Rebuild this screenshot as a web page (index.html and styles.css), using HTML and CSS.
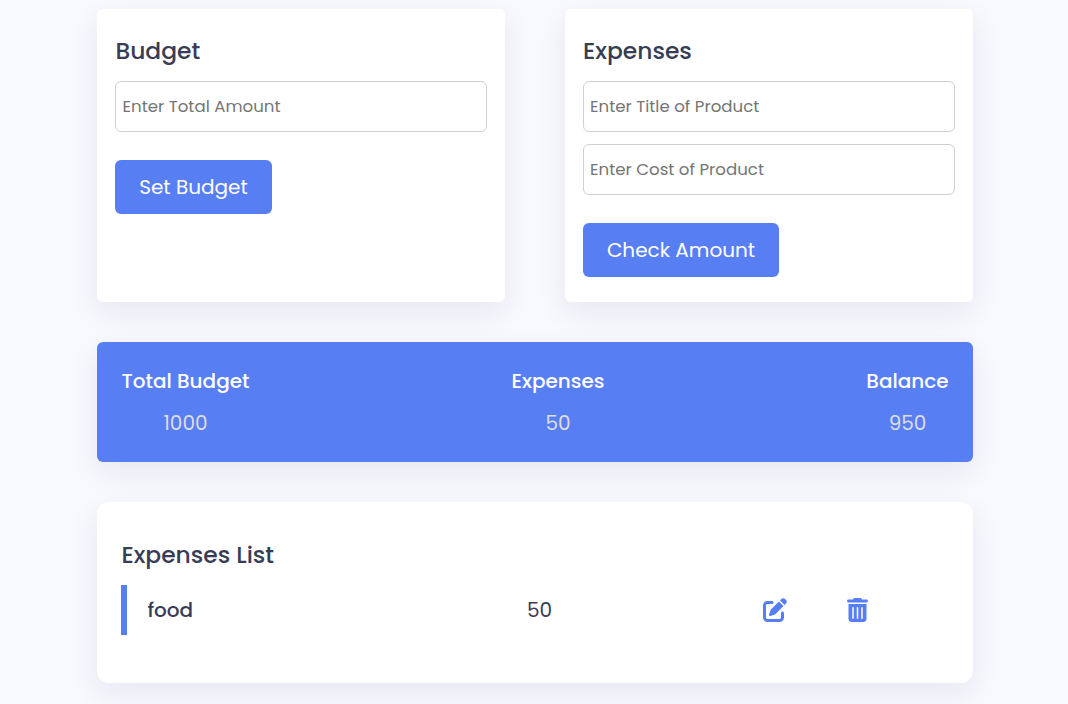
FILE: index.html
```html
<!DOCTYPE html>
<html lang="en">
<head>
<meta charset="utf-8">
<title>Budget App</title>
<link rel="stylesheet" href="styles.css">
</head>
<body>
<main class="wrapper">
  <div class="forms">
    <section class="card">
      <h3 class="title">Budget</h3>
      <input class="field field-budget" type="text" placeholder="Enter Total Amount">
      <button class="submit submit-budget">Set Budget</button>
    </section>
    <section class="card">
      <h3 class="title title-expenses">Expenses</h3>
      <input class="field" type="text" placeholder="Enter Title of Product">
      <input class="field" type="text" placeholder="Enter Cost of Product">
      <button class="submit submit-check">Check Amount</button>
    </section>
  </div>
  <section class="totals">
    <div class="total-budget"><p class="label">Total Budget</p><span class="value">1000</span></div>
    <div class="total-spent"><p class="label">Expenses</p><span class="value">50</span></div>
    <div class="total-balance"><p class="label">Balance</p><span class="value">950</span></div>
  </section>
  <section class="list">
    <h3 class="title">Expenses List</h3>
    <div class="row">
      <p class="product">food</p>
      <p class="amount">50</p>
      <button class="icon" aria-label="Edit"><svg width="24" height="24" viewBox="0 0 512 512"><path d="M471.6 21.7c-21.9-21.9-57.3-21.9-79.2 0L362.3 51.7l97.9 97.9 30.1-30.1c21.9-21.9 21.9-57.3 0-79.2L471.6 21.7zm-299.2 220c-6.1 6.1-10.8 13.6-13.5 21.9l-29.6 88.8c-2.9 8.6-.6 18.1 5.8 24.6s15.9 8.7 24.6 5.8l88.8-29.6c8.2-2.7 15.7-7.4 21.9-13.5L437.7 172.3 339.7 74.3 172.4 241.7zM96 64C43 64 0 107 0 160V416c0 53 43 96 96 96H352c53 0 96-43 96-96V320c0-17.7-14.3-32-32-32s-32 14.3-32 32v96c0 17.7-14.3 32-32 32H96c-17.7 0-32-14.3-32-32V160c0-17.7 14.3-32 32-32h96c17.7 0 32-14.3 32-32s-14.3-32-32-32H96z"/></svg></button>
      <button class="icon" aria-label="Delete"><svg width="21" height="24" viewBox="0 0 448 512"><path d="M135.2 17.7L128 32H32C14.3 32 0 46.3 0 64S14.3 96 32 96H416c17.7 0 32-14.3 32-32s-14.3-32-32-32H320l-7.2-14.3C307.4 6.8 296.3 0 284.2 0H163.8c-12.1 0-23.2 6.8-28.6 17.7zM416 128H32V448c0 35.3 28.7 64 64 64H352c35.3 0 64-28.7 64-64V128zM144 208V432c0 8.8-7.2 16-16 16s-16-7.2-16-16V208c0-8.8 7.2-16 16-16s16 7.2 16 16zm96 0V432c0 8.8-7.2 16-16 16s-16-7.2-16-16V208c0-8.8 7.2-16 16-16s16 7.2 16 16zm96 0V432c0 8.8-7.2 16-16 16s-16-7.2-16-16V208c0-8.8 7.2-16 16-16s16 7.2 16 16z"/></svg></button>
    </div>
  </section>
</main>
</body>
</html>
```
FILE: styles.css
```css
* { box-sizing: border-box; margin: 0; padding: 0; }
body {
  background: #f7f9fd;
  font-family: Poppins, Inter, sans-serif;
  color: #363d55;
  height: 704px;
  overflow: hidden;
}
.wrapper { width: 876px; margin-left: 97px; padding-top: 9px; }
.forms { display: grid; grid-template-columns: 1fr 1fr; gap: 60px; }
.card {
  height: 293px;
  padding: 24px 18px;
  background: #fff;
  border-radius: 6px;
  box-shadow: 0 10px 30px rgba(50, 18, 107, 0.075);
}
.title { padding-left: 0.4px; font-size: 23.4px; font-weight: 500; line-height: 36px; white-space: nowrap; }
.title-expenses { padding-left: 0; }
.field {
  display: block;
  width: 100%;
  height: 51px;
  margin-top: 12px;
  padding: 0 6px;
  border: 1px solid #d0d0d3;
  border-radius: 6px;
  font: 400 16.6px Poppins, Inter, sans-serif;
  letter-spacing: 0.02px;
}
.field-budget { padding-left: 6.5px; }
.field::placeholder { color: #757575; opacity: 1; }
.submit {
  display: block;
  height: 54px;
  margin-top: 28px;
  border: 0;
  border-radius: 6px;
  background: #587ef4;
  color: #fff;
  font: 400 20px Poppins, Inter, sans-serif;
  white-space: nowrap;
}
.submit-budget { width: 157px; }
.submit-check { width: 196px; }
.totals {
  display: flex;
  justify-content: space-between;
  height: 120px;
  margin-top: 40px;
  padding: 24px;
  border-radius: 6px;
  background: #587ef4;
  box-shadow: 0 10px 30px rgba(50, 18, 107, 0.075);
  text-align: center;
}
.label { font-size: 20px; font-weight: 500; line-height: 30px; color: #fff; white-space: nowrap; }
.value { display: block; margin-top: 12px; font-size: 20px; line-height: 30px; color: #dddddf; }
.total-budget { width: 129px; }
.total-spent { width: 94px; }
.total-balance { width: 83px; }
.list {
  height: 181px;
  margin-top: 40px;
  padding: 35px 24px;
  border-radius: 12px;
  background: #fff;
  box-shadow: 0 10px 30px rgba(50, 18, 107, 0.075);
}
.row {
  display: grid;
  grid-template-columns: 379.6px 236px 84.4px auto;
  align-items: center;
  justify-content: start;
  height: 50px;
  margin-top: 12px;
  padding-left: 20.4px;
  border-left: 6px solid #587ef4;
  font-size: 20px;
}
.product { font-weight: 500; }
.icon { display: flex; border: 0; background: none; }
.icon svg { fill: #587ef4; }
```
